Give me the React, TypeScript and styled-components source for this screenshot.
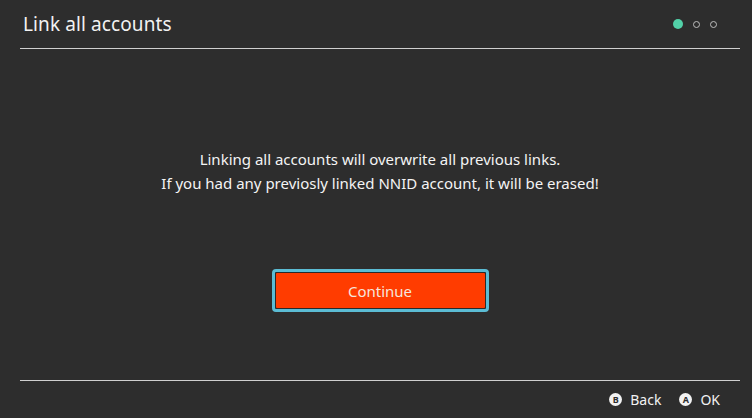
import { createGlobalStyle } from "styled-components";
import styled from "styled-components";

const GlobalStyle = createGlobalStyle`
    html, body {
        margin: 0;
        padding: 0;
        background: #2d2d2d;
    }
    body {
        font-family: "Noto Sans", "Open Sans", sans-serif;
        color: #ffffff;
    }
`;

const Screen = styled.div`
    width: 752px;
    height: 418px;
    background: #2d2d2d;
    display: flex;
    flex-direction: column;
    overflow: hidden;
`;

const Header = styled.header`
    height: 48px;
    margin: 0 12px 0 20px;
    border-bottom: 1px solid #cfcfcf;
    display: flex;
    align-items: center;
    justify-content: space-between;
    padding: 0 0 0 3px;
`;

const Title = styled.h1`
    margin: 0;
    font-size: 19px;
    font-weight: 400;
    letter-spacing: 0.1px;
    color: #f2f2f2;
`;

const Dots = styled.div`
    display: flex;
    align-items: center;
    gap: 10px;
    margin-right: 23px;
`;

const Dot = styled.span<{ $active?: boolean }>`
    box-sizing: border-box;
    width: ${(p) => (p.$active ? "10px" : "7px")};
    height: ${(p) => (p.$active ? "10px" : "7px")};
    border-radius: 50%;
    background: ${(p) => (p.$active ? "#52d1a8" : "transparent")};
    border: ${(p) => (p.$active ? "none" : "1.5px solid #bdbdbd")};
`;

const Body = styled.main`
    flex: 1;
    display: flex;
    flex-direction: column;
    align-items: center;
    padding: 98px 0 0 8px;
`;

const Message = styled.p`
    margin: 0;
    font-size: 15px;
    line-height: 24px;
    text-align: center;
    color: #f4f4f4;
`;

const ContinueButton = styled.button`
    margin-top: 74px;
    width: 217px;
    height: 43px;
    box-sizing: border-box;
    border: 3px solid #5bbcd4;
    border-radius: 4px;
    padding: 1px;
    background: #2a2a2a;
    cursor: pointer;
    display: flex;

    span {
        flex: 1;
        display: flex;
        align-items: center;
        justify-content: center;
        background: #ff3c00;
        border-radius: 1px;
        color: #f6e6dc;
        font-family: "Noto Sans", "Open Sans", sans-serif;
        font-size: 15px;
    }
`;

const Footer = styled.footer`
    height: 37px;
    margin: 0 12px 0 20px;
    border-top: 1px solid #cfcfcf;
    display: flex;
    align-items: center;
    justify-content: flex-end;
    gap: 18px;
    padding-right: 20px;
`;

const Hint = styled.div`
    display: flex;
    align-items: center;
    gap: 8px;
    font-size: 14px;
    color: #f2f2f2;
`;

const KeyBadge = styled.span`
    width: 13px;
    height: 13px;
    border-radius: 50%;
    background: #f2f2f2;
    color: #2d2d2d;
    font-size: 9px;
    font-weight: 700;
    display: flex;
    align-items: center;
    justify-content: center;
    line-height: 1;
`;

export default function App() {
    return (
        <Screen>
            <GlobalStyle />
            <Header>
                <Title>Link all accounts</Title>
                <Dots>
                    <Dot $active />
                    <Dot />
                    <Dot />
                </Dots>
            </Header>
            <Body>
                <Message>
                    Linking all accounts will overwrite all previous links.
                    <br />
                    If you had any previosly linked NNID account, it will be erased!
                </Message>
                <ContinueButton>
                    <span>Continue</span>
                </ContinueButton>
            </Body>
            <Footer>
                <Hint>
                    <KeyBadge>B</KeyBadge>
                    Back
                </Hint>
                <Hint>
                    <KeyBadge>A</KeyBadge>
                    OK
                </Hint>
            </Footer>
        </Screen>
    );
}
